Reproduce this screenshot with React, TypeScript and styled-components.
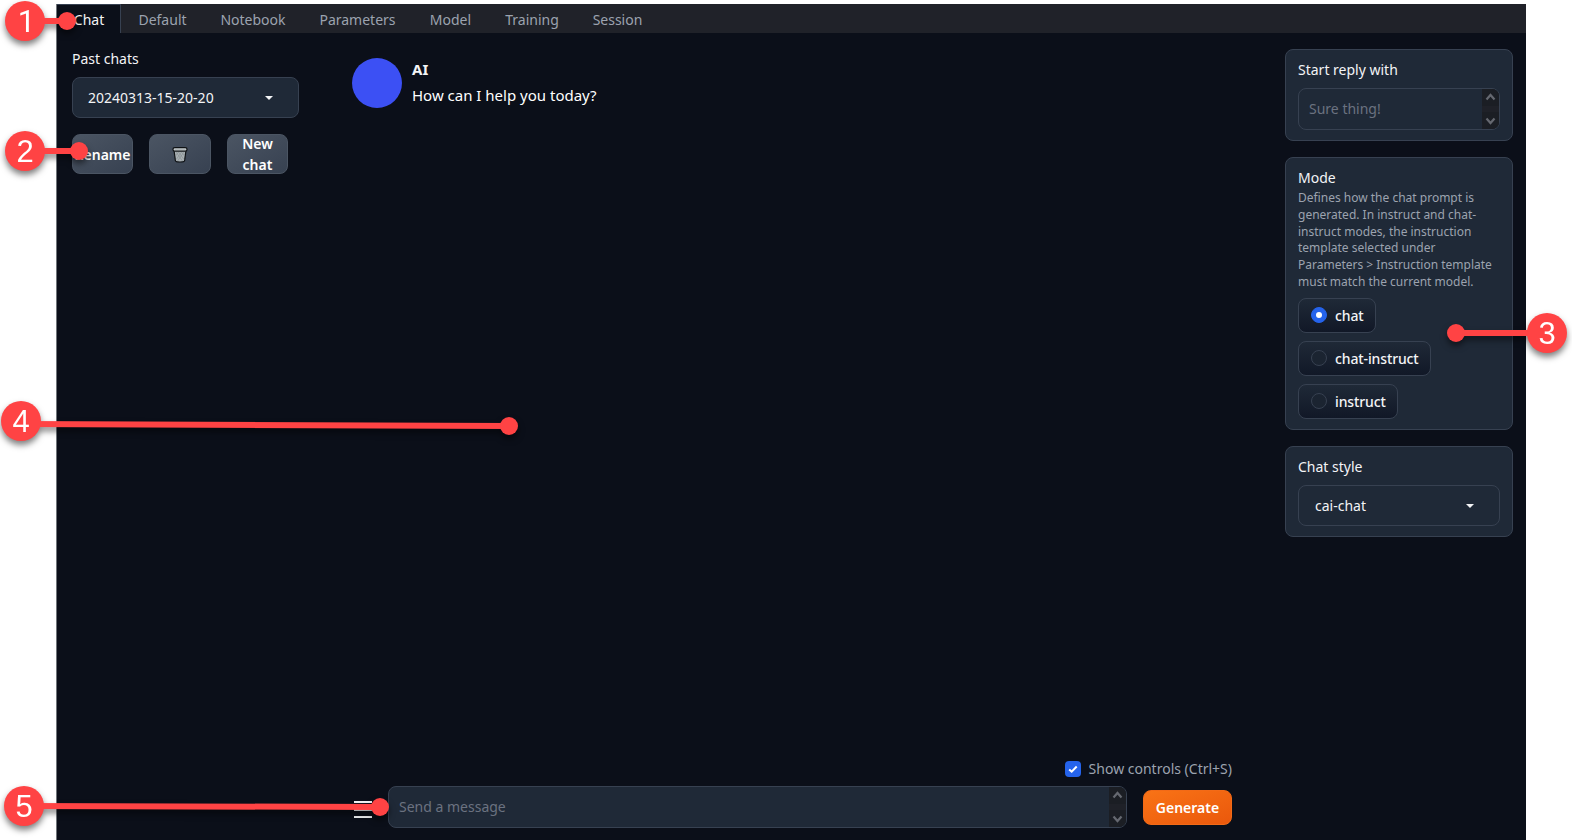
import React from 'react';
import styled, { createGlobalStyle } from 'styled-components';

const GlobalStyle = createGlobalStyle`
  *, *::before, *::after { box-sizing: border-box; }
  html, body { margin: 0; padding: 0; background: #fff; }
  body { font-family: 'Noto Sans', sans-serif; font-size: 14px; overflow: hidden; }
  button, textarea { font-family: inherit; }
`;

const Page = styled.div`
  position: relative;
  width: 1572px;
  height: 840px;
  padding: 4px 46px 0 56px;
  overflow: hidden;
`;

const AppFrame = styled.div`
  display: flex;
  flex-direction: column;
  height: 836px;
  border-left: 1px solid #70757a;
  background: #0b0f19;
  color: #f3f4f6;
`;

const TabBar = styled.nav`
  display: flex;
  flex: none;
  height: 29px;
  background: #202229;
`;

const Tab = styled.button<{ $active?: boolean; $width: number }>`
  width: ${(p) => p.$width}px;
  height: 29px;
  padding: ${(p) => (p.$active ? '1px 0 0 1px' : '2px 0 0')};
  border: 0 solid #374151;
  border-width: ${(p) => (p.$active ? '1px 1px 0 0' : '0')};
  background: ${(p) => (p.$active ? '#0b0f19' : 'transparent')};
  color: ${(p) => (p.$active ? '#f3f4f6' : '#9ca3af')};
  font-size: 14px;
  line-height: 27px;
  text-align: center;
`;

const Body = styled.div`
  display: flex;
  flex: 1;
  min-height: 0;
  padding: 16px 13px 0 15px;
`;

const HistoryColumn = styled.aside`
  width: 227px;
  flex: none;
`;

const Label = styled.div`
  font-size: 14px;
  line-height: 20px;
`;

const Select = styled.div<{ $inset?: number }>`
  display: flex;
  align-items: center;
  justify-content: space-between;
  height: 41px;
  margin-top: 8px;
  padding: 0 25px 0 ${(p) => p.$inset ?? 16}px;
  border: 1px solid #374151;
  border-radius: 8px;
  background: #1f2937;
  font-size: 14px;
`;

const Caret = styled.svg`
  display: block;
  width: 8px;
  height: 4px;
  fill: #f3f4f6;
`;

const ButtonRow = styled.div`
  display: flex;
  gap: 16px;
  margin-top: 16px;
`;

const SecondaryButton = styled.button<{ $width: number }>`
  display: flex;
  align-items: center;
  justify-content: center;
  width: ${(p) => p.$width}px;
  height: 40px;
  padding: 0;
  border: 1px solid #4b5563;
  border-radius: 8px;
  background: linear-gradient(to bottom right, #4b5563, #374151);
  color: #fff;
  font-size: 14px;
  font-weight: 600;
  line-height: 21px;
`;

const ChatColumn = styled.main`
  display: flex;
  flex-direction: column;
  width: 880px;
  margin-left: 53px;
  flex: none;
`;

const Message = styled.div`
  display: flex;
  flex: 1;
  gap: 10px;
  padding-top: 9px;
`;

const Avatar = styled.div`
  width: 50px;
  height: 50px;
  border-radius: 50%;
  background: #3c50f4;
`;

const Author = styled.div`
  font-size: 15px;
  font-weight: 700;
  line-height: 23px;
`;

const MessageText = styled.p`
  margin: 3px 0 0;
  font-size: 15px;
  line-height: 22.5px;
  color: #fff;
`;

const ControlsToggle = styled.label`
  display: flex;
  align-items: center;
  align-self: flex-end;
  gap: 8px;
  height: 20px;
  margin-bottom: 7px;
  color: #9ca3af;
  font-size: 14px;
`;

const ToggleText = styled.span`
  padding-bottom: 2px;
`;

const CheckBox = styled.span`
  display: grid;
  place-items: center;
  width: 16px;
  height: 16px;
  border-radius: 4px;
  background: #2563eb;
`;

const InputRow = styled.div`
  display: flex;
  align-items: center;
  height: 42px;
  margin-bottom: 12px;
`;

const MenuButton = styled.div`
  display: flex;
  flex-direction: column;
  gap: 5.5px;
  width: 18px;
  margin: 5px 16px 0 2px;
`;

const MenuLine = styled.span`
  height: 2px;
  background: #f3f4f6;
`;

const TextBox = styled.div`
  display: flex;
  justify-content: space-between;
  align-items: center;
  flex: 1;
  height: 42px;
  padding-left: 10px;
  overflow: hidden;
  border: 1px solid #374151;
  border-radius: 8px;
  background: #1f2937;
  color: #6b7280;
  font-size: 14px;
`;

const Placeholder = styled.span`
  padding-bottom: 2px;
`;

const ScrollTrack = styled.div`
  display: flex;
  flex-direction: column;
  justify-content: space-between;
  width: 17px;
  height: 40px;
  background: #1f2128;
`;

const ScrollArrow = styled.svg`
  display: block;
  width: 17px;
  height: 17px;
  background: #1b1e24;
  fill: none;
  stroke: #656870;
  stroke-width: 2.2;
`;

const GenerateButton = styled.button`
  width: 89px;
  height: 35px;
  margin: 0 0 0 16px;
  padding: 0;
  border: 1px solid #f26a17;
  border-radius: 8px;
  background: linear-gradient(to bottom right, #f97316, #ea580c);
  color: #fff;
  font-size: 14px;
  font-weight: 600;
`;

const SettingsColumn = styled.aside`
  display: flex;
  flex-direction: column;
  gap: 16px;
  width: 228px;
  margin-left: auto;
`;

const Card = styled.section<{ $height: number }>`
  height: ${(p) => p.$height}px;
  padding: 10px 12px 0;
  border: 1px solid #374151;
  border-radius: 8px;
  background: #1f2937;
`;

const FieldSpacer = styled.div`
  display: flex;
  margin-top: 8px;
`;

const Hint = styled.p`
  margin: 2px 0 7px;
  color: #9ca3af;
  font-size: 12px;
  line-height: 16.8px;
`;

const RadioList = styled.div`
  display: flex;
  flex-direction: column;
  align-items: flex-start;
  gap: 8px;
`;

const RadioOption = styled.div<{ $width: number }>`
  display: flex;
  align-items: center;
  gap: 8px;
  width: ${(p) => p.$width}px;
  height: 35px;
  padding-left: 12px;
  border: 1px solid #374151;
  border-radius: 8px;
  background: linear-gradient(to bottom, #1f2937, #111827);
  font-size: 14px;
  font-weight: 500;
  letter-spacing: -0.12px;
  white-space: nowrap;
`;

const RadioDot = styled.span<{ $checked?: boolean }>`
  display: grid;
  place-items: center;
  width: 16px;
  height: 16px;
  border: 1px solid ${(p) => (p.$checked ? '#2563eb' : '#374151')};
  border-radius: 50%;
  background: ${(p) => (p.$checked ? '#2563eb' : '#1b2431')};

  &::after {
    content: '';
    width: 6px;
    height: 6px;
    border-radius: 50%;
    background: ${(p) => (p.$checked ? '#fff' : 'transparent')};
  }
`;

const CalloutLayer = styled.svg`
  position: absolute;
  inset: 0;
  width: 1572px;
  height: 840px;
  pointer-events: none;
`;

const CalloutGroup = styled.g`
  filter: drop-shadow(0 4px 3px rgba(0, 0, 0, 0.5));
  fill: #ff4344;
  stroke: none;
`;

const CalloutNumber = styled.text<{ $plain?: boolean }>`
  fill: #fff;
  font-family: ${(p) => (p.$plain ? 'Roboto' : "'Liberation Sans'")}, Arial, sans-serif;
  font-size: 31px;
  text-anchor: middle;
`;

const tabs = [
  { name: 'Chat', width: 64 },
  { name: 'Default', width: 83 },
  { name: 'Notebook', width: 98 },
  { name: 'Parameters', width: 111 },
  { name: 'Model', width: 75 },
  { name: 'Training', width: 88 },
  { name: 'Session', width: 83 },
];

const modes = [
  { name: 'chat', width: 78 },
  { name: 'chat-instruct', width: 133 },
  { name: 'instruct', width: 100 },
];

const callouts = [
  { n: 1, x: 25, y: 21, startY: 21, dotX: 67, dotY: 21 },
  { n: 2, x: 25, y: 151, startY: 151, dotX: 79, dotY: 151 },
  { n: 3, x: 1547, y: 333, startY: 333, dotX: 1456, dotY: 333 },
  { n: 4, x: 21, y: 421, startY: 424, dotX: 509, dotY: 426 },
  { n: 5, x: 24, y: 806, startY: 806, dotX: 380, dotY: 807 },
];

const DownCaret = () => (
  <Caret viewBox="0 0 8 4">
    <path d="M0 0h8L4 4z" />
  </Caret>
);

const Scrollbar = () => (
  <ScrollTrack>
    <ScrollArrow viewBox="0 0 17 17">
      <path d="M4.5 10.5l4-4.5 4 4.5" />
    </ScrollArrow>
    <ScrollArrow viewBox="0 0 17 17">
      <path d="M4.5 6.5l4 4.5 4-4.5" />
    </ScrollArrow>
  </ScrollTrack>
);

const TrashIcon = () => (
  <svg width="16" height="17" viewBox="0 0 16 17">
    <path d="M2 4L3.4 14.6q.3 1.4 4.6 1.4t4.6-1.4L14 4z" fill="#a9b0b3" stroke="#0f1215" strokeWidth="1.2" />
    <path
      d="M4 6l6.5 9M6.5 6l5.5 7.5M9.5 6l3 4M12 6l-6.5 9M9.5 6L4.2 13.5M6.5 6l-3 4"
      stroke="#858d91"
      strokeWidth=".6"
      fill="none"
    />
    <rect x="1" y="1.6" width="14" height="3.6" rx="1.7" fill="#c3c9ca" stroke="#0f1215" strokeWidth="1.2" />
    <path d="M3 3h10" stroke="#9aa1a3" strokeWidth=".8" />
  </svg>
);

export default function App() {
  return (
    <>
      <GlobalStyle />
      <Page>
        <AppFrame>
          <TabBar>
            {tabs.map((t, i) => (
              <Tab key={t.name} $active={i === 0} $width={t.width}>
                {t.name}
              </Tab>
            ))}
          </TabBar>
          <Body>
            <HistoryColumn>
              <Label>Past chats</Label>
              <Select $inset={15}>
                20240313-15-20-20
                <DownCaret />
              </Select>
              <ButtonRow>
                <SecondaryButton $width={61}>Rename</SecondaryButton>
                <SecondaryButton $width={62} aria-label="Delete">
                  <TrashIcon />
                </SecondaryButton>
                <SecondaryButton $width={61}>
                  New
                  <br />
                  chat
                </SecondaryButton>
              </ButtonRow>
            </HistoryColumn>
            <ChatColumn>
              <Message>
                <Avatar />
                <div>
                  <Author>AI</Author>
                  <MessageText>How can I help you today?</MessageText>
                </div>
              </Message>
              <ControlsToggle>
                <CheckBox>
                  <svg width="16" height="16" viewBox="0 0 16 16">
                    <path d="M4.2 8.4l2.5 2.3 5-5.2" fill="none" stroke="#fff" strokeWidth="2" />
                  </svg>
                </CheckBox>
                <ToggleText>Show controls (Ctrl+S)</ToggleText>
              </ControlsToggle>
              <InputRow>
                <MenuButton>
                  <MenuLine />
                  <MenuLine />
                  <MenuLine />
                </MenuButton>
                <TextBox>
                  <Placeholder>Send a message</Placeholder>
                  <Scrollbar />
                </TextBox>
                <GenerateButton>Generate</GenerateButton>
              </InputRow>
            </ChatColumn>
            <SettingsColumn>
              <Card $height={92}>
                <Label>Start reply with</Label>
                <FieldSpacer>
                  <TextBox>
                    <Placeholder>Sure thing!</Placeholder>
                    <Scrollbar />
                  </TextBox>
                </FieldSpacer>
              </Card>
              <Card $height={273}>
                <Label>Mode</Label>
                <Hint>
                  Defines how the chat prompt is generated. In instruct and chat-instruct modes, the instruction
                  template selected under Parameters &gt; Instruction template must match the current model.
                </Hint>
                <RadioList>
                  {modes.map((m, i) => (
                    <RadioOption key={m.name} $width={m.width}>
                      <RadioDot $checked={i === 0} />
                      {m.name}
                    </RadioOption>
                  ))}
                </RadioList>
              </Card>
              <Card $height={91}>
                <Label>Chat style</Label>
                <Select>
                  cai-chat
                  <DownCaret />
                </Select>
              </Card>
            </SettingsColumn>
          </Body>
        </AppFrame>
        <CalloutLayer viewBox="0 0 1572 840">
          {callouts.map((c) => (
            <CalloutGroup key={c.n}>
              <line x1={c.x} y1={c.startY} x2={c.dotX} y2={c.dotY + 0.01} stroke="#ff4344" strokeWidth="6" />
              <circle cx={c.dotX} cy={c.dotY} r="9" />
              <circle cx={c.x} cy={c.y} r="20" />
              <CalloutNumber $plain={c.n === 1} x={c.n === 1 ? c.x + 1.5 : c.x} y={c.y + 10.5}>
                {c.n}
              </CalloutNumber>
            </CalloutGroup>
          ))}
        </CalloutLayer>
      </Page>
    </>
  );
}
